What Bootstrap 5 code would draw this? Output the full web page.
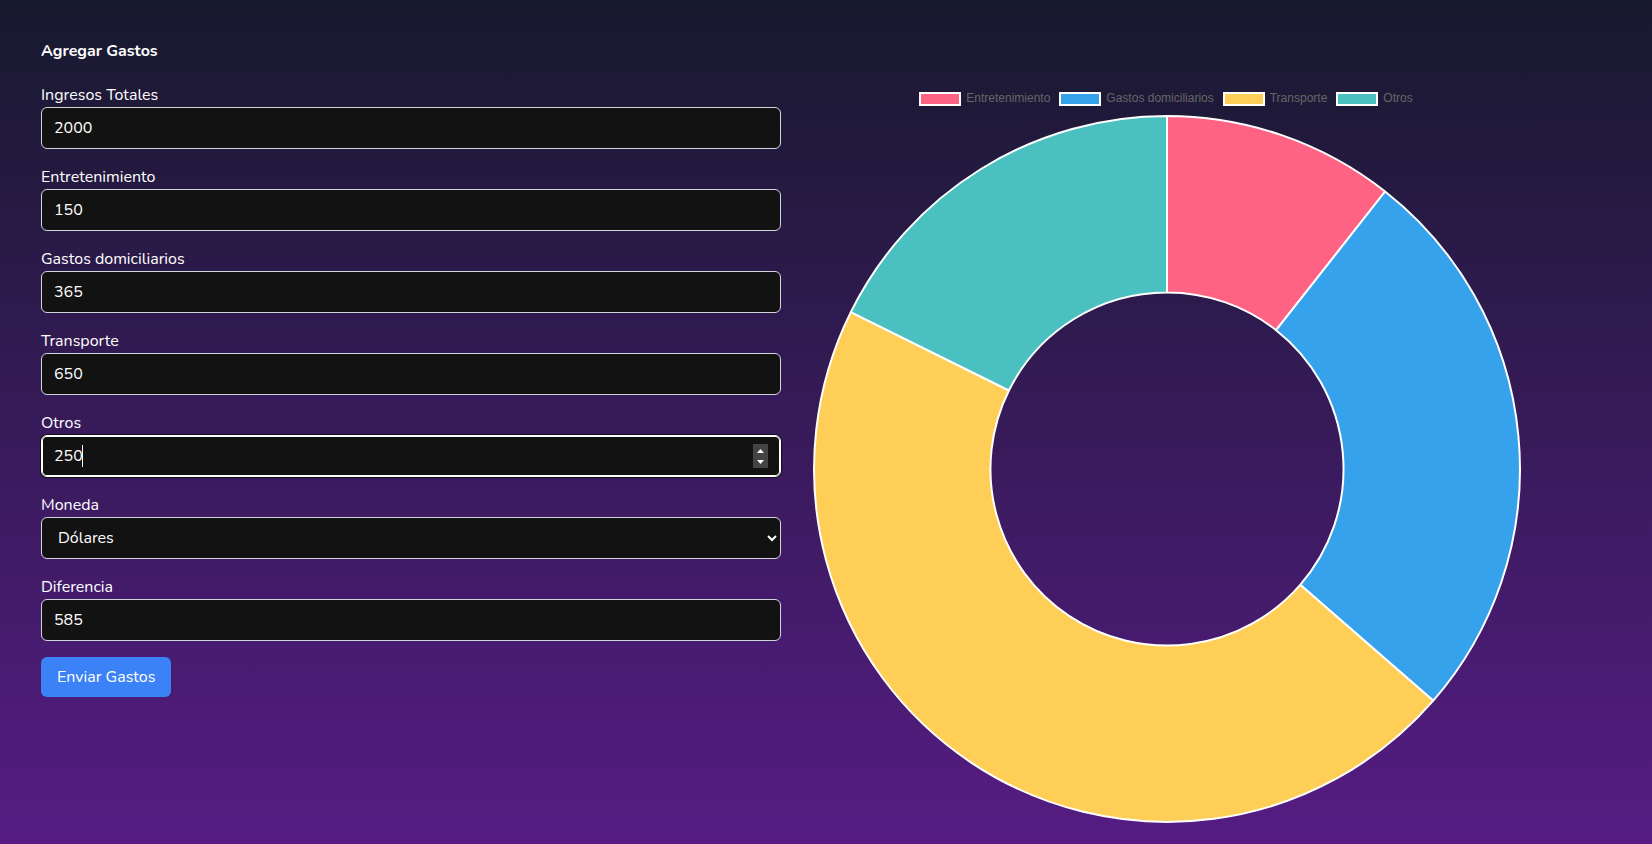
<!DOCTYPE html>
<html lang="es">
<head>
<meta charset="utf-8">
<meta name="viewport" content="width=device-width, initial-scale=1">
<title>Agregar Gastos</title>
<link href="https://cdn.jsdelivr.net/npm/bootstrap@5.3.0/dist/css/bootstrap.min.css" rel="stylesheet">
<style>
  body {
    min-height: 100vh;
    font-family: Nunito, Lato, sans-serif;
    font-size: 16px;
    line-height: 24px;
    color: #fff;
    background: linear-gradient(#17192e, #561c84) no-repeat;
    color-scheme: dark;
  }
  main { padding: 39px 131px 20px 41px; }
  h1 { font-size: 16px; line-height: 24px; margin-bottom: 20px; }
  .expense-field, .expense-field:focus {
    height: 42px;
    padding: 8px 12px;
    color: #fff;
    background-color: #121212;
    border: 1px solid #d1d5db;
    border-radius: 6px;
  }
  select.expense-field { appearance: auto; }
  .expense-field:focus {
    border-color: #fff;
    box-shadow: inset 0 0 0 1px #fff, 0 0 0 1px #101010;
    caret-color: transparent;
  }
  .expense-field:focus::-webkit-inner-spin-button {
    appearance: none;
    width: 15px;
    height: 24px;
    background: #444 url("data:image/svg+xml,%3Csvg xmlns='http://www.w3.org/2000/svg' width='15' height='24'%3E%3Cpath fill='%23fff' d='M4 9L7.5 5L11 9ZM4 16H11L7.5 20Z'/%3E%3C/svg%3E") no-repeat;
  }
  /* Steady text caret after the value of the focused field */
  .text-caret {
    position: absolute;
    display: none;
    left: 41px;
    top: 10px;
    width: 1px;
    height: 22px;
    background: #fff;
    pointer-events: none;
  }
  .expense-field:focus + .text-caret { display: block; }
  .btn-send {
    --bs-btn-color: #fff;
    --bs-btn-bg: #3b82f6;
    --bs-btn-hover-color: #fff;
    --bs-btn-hover-bg: #2563eb;
    --bs-btn-border-width: 0;
    --bs-btn-border-radius: 6px;
    --bs-btn-padding-x: 16px;
    --bs-btn-padding-y: 8px;
  }
  .chart-pane { padding-left: 32px; }
  .chart-legend {
    gap: 9px;
    height: 32px;
    padding-right: 2px;
    font: 12px/12px "Liberation Sans", Arial, sans-serif;
    color: #666;
  }
  .chart-legend li { display: flex; align-items: flex-start; gap: 5px; }
  .swatch { width: 42px; height: 14px; border: 2px solid #fff; }
  .pink { background: #ff6384; fill: #ff6384; }
  .blue { background: #36a2eb; fill: #36a2eb; }
  .yellow { background: #ffce56; fill: #ffce56; }
  .teal { background: #4bc0c0; fill: #4bc0c0; }
  .doughnut path { background: none; stroke: #fff; stroke-width: 2; stroke-linejoin: bevel; }
</style>
</head>
<body>
<main>
  <h1 class="fw-bold">Agregar Gastos</h1>
  <div class="row g-0">
    <form class="col-6">
      <div class="mb-3">
        <label class="d-block" for="ingresos">Ingresos Totales</label>
        <input class="form-control expense-field" type="number" id="ingresos" value="2000">
      </div>
      <div class="mb-3">
        <label class="d-block" for="entretenimiento">Entretenimiento</label>
        <input class="form-control expense-field" type="number" id="entretenimiento" value="150">
      </div>
      <div class="mb-3">
        <label class="d-block" for="domicilio">Gastos domiciliarios</label>
        <input class="form-control expense-field" type="number" id="domicilio" value="365">
      </div>
      <div class="mb-3">
        <label class="d-block" for="transporte">Transporte</label>
        <input class="form-control expense-field" type="number" id="transporte" value="650">
      </div>
      <div class="mb-3">
        <label class="d-block" for="otros">Otros</label>
        <div class="position-relative">
          <input class="form-control expense-field" type="number" id="otros" value="250" autofocus>
          <span class="text-caret"></span>
        </div>
      </div>
      <div class="mb-3">
        <label class="d-block" for="moneda">Moneda</label>
        <select class="form-control expense-field" id="moneda">
          <option>Dólares</option>
        </select>
      </div>
      <div class="mb-3">
        <label class="d-block" for="diferencia">Diferencia</label>
        <input class="form-control expense-field" type="number" id="diferencia" value="585">
      </div>
      <button class="btn btn-send" type="button">Enviar Gastos</button>
    </form>
    <section class="col-6 chart-pane">
      <ul class="chart-legend list-unstyled d-flex justify-content-center align-items-center mb-0">
        <li><span class="swatch pink"></span>Entretenimiento</li>
        <li><span class="swatch blue"></span>Gastos domiciliarios</li>
        <li><span class="swatch yellow"></span>Transporte</li>
        <li><span class="swatch teal"></span>Otros</li>
      </ul>
      <svg class="doughnut d-block w-100" viewBox="0 0 708 708" role="img" aria-label="Gastos">
        <path class="pink" d="M354 1A353 353 0 0 1 572.1 76.5L463.1 215.2A176.5 176.5 0 0 0 354 177.5Z"/>
        <path class="blue" d="M572.1 76.5A353 353 0 0 1 620.3 585.7L487.2 469.8A176.5 176.5 0 0 0 463.1 215.2Z"/>
        <path class="yellow" d="M620.3 585.7A353 353 0 0 1 37.8 197.1L195.9 275.5A176.5 176.5 0 0 0 487.2 469.8Z"/>
        <path class="teal" d="M37.8 197.1A353 353 0 0 1 354 1L354 177.5A176.5 176.5 0 0 0 195.9 275.5Z"/>
      </svg>
    </section>
  </div>
</main>
<script src="https://cdn.jsdelivr.net/npm/bootstrap@5.3.0/dist/js/bootstrap.bundle.min.js"></script>
<script>
  document.getElementById('otros').focus();
</script>
</body>
</html>
